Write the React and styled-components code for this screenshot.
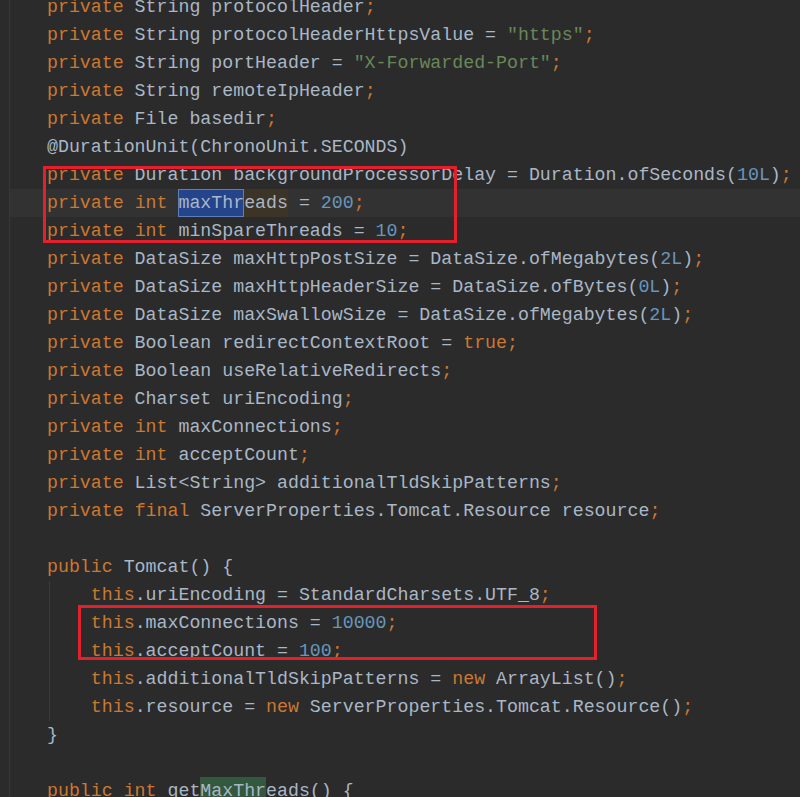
import styled, { createGlobalStyle } from "styled-components";

const GlobalStyle = createGlobalStyle`
	html, body {
		margin: 0;
		padding: 0;
		background: #2b2b2b;
	}
`;

const COLORS = {
	keyword: "#cc7832",
	string: "#6a8759",
	number: "#6897bb",
	plain: "#a9b7c6",
};

const TOKEN_RE = /(\b(?:private|public|int|this|new|final|true)\b|"[^"]*"|\b\d+L?\b|;)/;

const kindOf = (part) => {
	if (part === ";") return "keyword";
	if (part.startsWith('"')) return "string";
	if (/^\d/.test(part)) return "number";
	if (TOKEN_RE.test(part) && /^[a-z]+$/.test(part)) return "keyword";
	return "plain";
};

const tokenize = (src) =>
	src
		.split(TOKEN_RE)
		.filter(Boolean)
		.map((part, i) => (
			<Token key={i} $kind={kindOf(part)}>
				{part}
			</Token>
		));

const CodeLine = ({ src, current }) => <Line $current={current}>{tokenize(src)}</Line>;

const fieldsHead = [
	"private String protocolHeader;",
	'private String protocolHeaderHttpsValue = "https";',
	'private String portHeader = "X-Forwarded-Port";',
	"private String remoteIpHeader;",
	"private File basedir;",
	"@DurationUnit(ChronoUnit.SECONDS)",
];

const fieldsTail = [
	"private DataSize maxHttpPostSize = DataSize.ofMegabytes(2L);",
	"private DataSize maxHttpHeaderSize = DataSize.ofBytes(0L);",
	"private DataSize maxSwallowSize = DataSize.ofMegabytes(2L);",
	"private Boolean redirectContextRoot = true;",
	"private Boolean useRelativeRedirects;",
	"private Charset uriEncoding;",
	"private int maxConnections;",
	"private int acceptCount;",
	"private List<String> additionalTldSkipPatterns;",
	"private final ServerProperties.Tomcat.Resource resource;",
];

const App = () => (
	<>
		<GlobalStyle />
		<Page>
			<Gutter />
			<Code>
				{fieldsHead.map((src) => (
					<CodeLine key={src} src={src} />
				))}

				<Marked>
					<CodeLine src="private Duration backgroundProcessorDelay = Duration.ofSeconds(10L);" />
					<Line $current>
						{tokenize("private int ")}
						<Usage>
							<Selection>maxThr</Selection>eads
						</Usage>
						{tokenize(" = 200;")}
					</Line>
					<CodeLine src="private int minSpareThreads = 10;" />
					<RedBox $top={5} $left={33} $width={414} $height={77} />
				</Marked>

				{fieldsTail.map((src) => (
					<CodeLine key={src} src={src} />
				))}

				<CodeLine src="" />
				<CodeLine src="public Tomcat() {" />
				<Block>
					<CodeLine src="    this.uriEncoding = StandardCharsets.UTF_8;" />
					<Marked>
						<CodeLine src="    this.maxConnections = 10000;" />
						<CodeLine src="    this.acceptCount = 100;" />
						<RedBox $top={-4} $left={68} $width={519} $height={55} />
					</Marked>
					<CodeLine src="    this.additionalTldSkipPatterns = new ArrayList();" />
					<CodeLine src="    this.resource = new ServerProperties.Tomcat.Resource();" />
				</Block>
				<CodeLine src="}" />
				<CodeLine src="" />
				<Line>
					{tokenize("public int get")}
					<Found>MaxThr</Found>
					{tokenize("eads() {")}
				</Line>
			</Code>
		</Page>
	</>
);

const Page = styled.div`
	display: flex;
	height: 797px;
	overflow: hidden;
	background: #2b2b2b;
`;

const Gutter = styled.div`
	width: 9px;
	flex: none;
	border-right: 1px solid #383838;
`;

const Code = styled.div`
	flex: 1;
	margin-top: -7px;
	font-family: "Liberation Mono", "DejaVu Sans Mono", monospace;
	font-size: 18.25px;
	color: ${COLORS.plain};
`;

const Line = styled.div`
	height: 28px;
	line-height: 28px;
	padding-left: 37px;
	white-space: pre;
	background: ${(props) => (props.$current ? "#323232" : "transparent")};
`;

const Token = styled.span`
	color: ${(props) => COLORS[props.$kind]};
`;

const Usage = styled.span`
	display: inline-block;
	height: 28px;
	background: #3b3427;
`;

const Selection = styled.span`
	display: inline-block;
	height: 28px;
	background: #24458c;
	box-shadow: inset 0 0 0 1px #5f7db8;
`;

const Found = styled.span`
	display: inline-block;
	height: 28px;
	background: #32593d;
`;

const Marked = styled.div`
	position: relative;
`;

const RedBox = styled.div`
	position: absolute;
	top: ${(props) => props.$top}px;
	left: ${(props) => props.$left}px;
	width: ${(props) => props.$width}px;
	height: ${(props) => props.$height}px;
	box-sizing: border-box;
	border: 3px solid #e3202b;
	pointer-events: none;
`;

const Block = styled.div`
	position: relative;

	&::before {
		content: "";
		position: absolute;
		top: 0;
		bottom: 0;
		left: 39px;
		border-left: 1px solid #3a3a3a;
	}
`;

export default App;
